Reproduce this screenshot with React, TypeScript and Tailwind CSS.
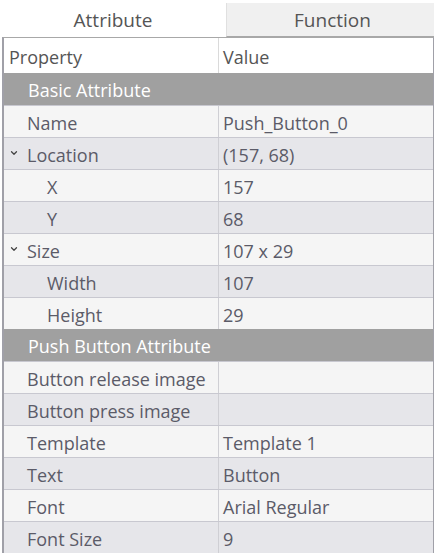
import { ChevronDown } from "lucide-react";

type Row =
  | { kind: "group"; label: string }
  | { kind: "prop"; label: string; value?: string; level: 0 | 1; expander?: boolean };

const rows: Row[] = [
  { kind: "group", label: "Basic Attribute" },
  { kind: "prop", label: "Name", value: "Push_Button_0", level: 0 },
  { kind: "prop", label: "Location", value: "(157, 68)", level: 0, expander: true },
  { kind: "prop", label: "X", value: "157", level: 1 },
  { kind: "prop", label: "Y", value: "68", level: 1 },
  { kind: "prop", label: "Size", value: "107 x 29", level: 0, expander: true },
  { kind: "prop", label: "Width", value: "107", level: 1 },
  { kind: "prop", label: "Height", value: "29", level: 1 },
  { kind: "group", label: "Push Button Attribute" },
  { kind: "prop", label: "Button release image", level: 0 },
  { kind: "prop", label: "Button press image", level: 0 },
  { kind: "prop", label: "Template", value: "Template 1", level: 0 },
  { kind: "prop", label: "Text", value: "Button", level: 0 },
  { kind: "prop", label: "Font", value: "Arial Regular", level: 0 },
  { kind: "prop", label: "Font Size", value: "9", level: 0 },
];

export default function App() {
  return (
    <div
      className="w-[434px] h-[554px] bg-white overflow-hidden text-[#5b5b68]"
      style={{ fontFamily: '"Open Sans", "Noto Sans", sans-serif' }}
    >
      <div className="flex h-[37px]">
        <div className="w-[226px] flex items-center justify-center pt-[3px] bg-white text-[19px] text-[#555]">
          Attribute
        </div>
        <div className="flex-1 flex flex-col">
          <div className="h-[3px] bg-white" />
          <div className="flex-1 flex items-center justify-center pt-[2px] bg-[#f0f0f0] border-l border-[#e0e0e0] border-b border-b-[#a8a8a8] text-[19px] text-[#555] pl-[4px]">
            Function
          </div>
        </div>
      </div>
      <div className="ml-[2px] border-l-2 border-r border-t border-[#a0a0a8] border-t-[#a8a8a8]">
        <div className="flex h-[35px] bg-white text-[18px] text-[#555]">
          <div className="w-[215px] pl-[5px] pt-[4px] flex items-center border-r border-[#dadada]">Property</div>
          <div className="flex-1 pl-[4px] pt-[4px] flex items-center">Value</div>
        </div>
        {rows.map((r, i) => {
          if (r.kind === "group") {
            return (
              <div key={i} className="h-[32px] bg-[#a0a0a0] text-white text-[18px] flex items-center pl-[24px] pt-[3px]">
                {r.label}
              </div>
            );
          }
          const dark = i % 2 === 0;
          return (
            <div
              key={i}
              className={`flex h-[32px] text-[18px] border-t border-[#c8c8d0] ${dark ? "bg-[#e6e6ea]" : "bg-[#f5f5f5]"}`}
            >
              <div className="w-[215px] flex items-center pt-[3px] border-r border-[#cfcfd4] relative">
                {r.expander && (
                  <ChevronDown className="absolute left-[5px] top-[10px] size-[10px] text-[#444]" strokeWidth={3} />
                )}
                <span className={r.level === 1 ? "pl-[43px]" : "pl-[23px]"}>{r.label}</span>
              </div>
              <div className="flex-1 pl-[4px] pt-[3px] flex items-center">{r.value}</div>
            </div>
          );
        })}
      </div>
    </div>
  );
}
